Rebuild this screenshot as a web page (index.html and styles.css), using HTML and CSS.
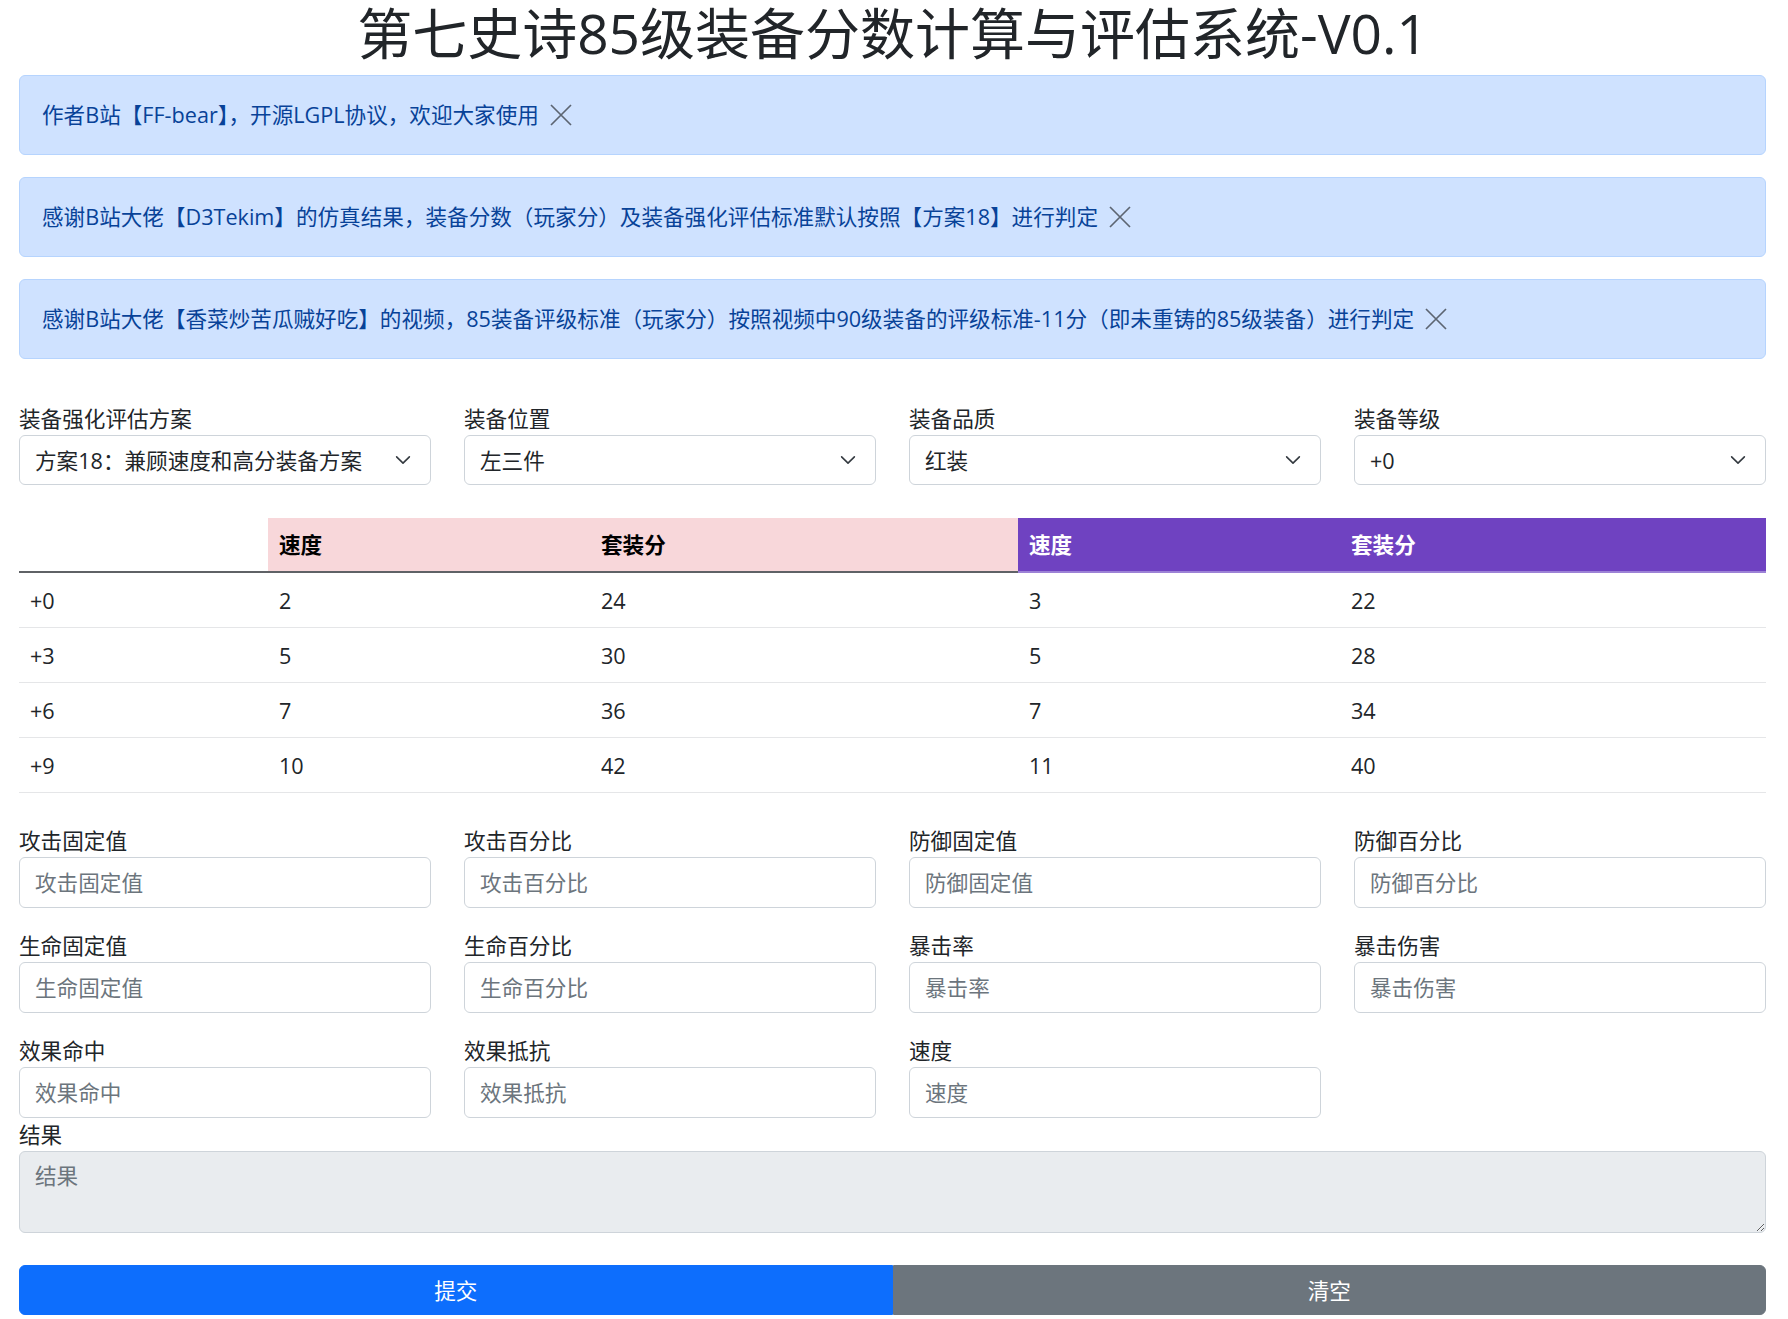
FILE: index.html
```html
<!DOCTYPE html>
<html lang="zh-CN">
<head>
<meta charset="utf-8">
<title>第七史诗85级装备分数计算与评估系统-V0.1</title>
<link rel="stylesheet" href="styles.css">
</head>
<body>
<div class="page">
  <h1 class="title">第七史诗85级装备分数计算与评估系统-V0.1</h1>

  <div class="alert">作者B站【FF-bear】，开源LGPL协议，欢迎大家使用 <button class="btn-close" type="button" aria-label="Close"><svg viewBox="0 0 22 22" width="22" height="22"><path d="M1 1L21 21M21 1L1 21"/></svg></button></div>
  <div class="alert">感谢B站大佬【D3Tekim】的仿真结果，装备分数（玩家分）及装备强化评估标准默认按照【方案18】进行判定 <button class="btn-close" type="button" aria-label="Close"><svg viewBox="0 0 22 22" width="22" height="22"><path d="M1 1L21 21M21 1L1 21"/></svg></button></div>
  <div class="alert">感谢B站大佬【香菜炒苦瓜贼好吃】的视频，85装备评级标准（玩家分）按照视频中90级装备的评级标准-11分（即未重铸的85级装备）进行判定 <button class="btn-close" type="button" aria-label="Close"><svg viewBox="0 0 22 22" width="22" height="22"><path d="M1 1L21 21M21 1L1 21"/></svg></button></div>

  <div class="grid4 selects">
    <div class="field">
      <label>装备强化评估方案</label>
      <div class="select-wrap">
        <select class="form-select"><option>方案18：兼顾速度和高分装备方案</option></select>
        <svg class="chev" viewBox="0 0 16 16" width="22" height="17"><path d="M2 5l6 6 6-6" fill="none" stroke="#343a40" stroke-width="1.5" stroke-linecap="round" stroke-linejoin="round"/></svg>
      </div>
    </div>
    <div class="field">
      <label>装备位置</label>
      <div class="select-wrap">
        <select class="form-select"><option>左三件</option></select>
        <svg class="chev" viewBox="0 0 16 16" width="22" height="17"><path d="M2 5l6 6 6-6" fill="none" stroke="#343a40" stroke-width="1.5" stroke-linecap="round" stroke-linejoin="round"/></svg>
      </div>
    </div>
    <div class="field">
      <label>装备品质</label>
      <div class="select-wrap">
        <select class="form-select"><option>红装</option></select>
        <svg class="chev" viewBox="0 0 16 16" width="22" height="17"><path d="M2 5l6 6 6-6" fill="none" stroke="#343a40" stroke-width="1.5" stroke-linecap="round" stroke-linejoin="round"/></svg>
      </div>
    </div>
    <div class="field">
      <label>装备等级</label>
      <div class="select-wrap">
        <select class="form-select"><option>+0</option></select>
        <svg class="chev" viewBox="0 0 16 16" width="22" height="17"><path d="M2 5l6 6 6-6" fill="none" stroke="#343a40" stroke-width="1.5" stroke-linecap="round" stroke-linejoin="round"/></svg>
      </div>
    </div>
  </div>

  <table class="score-table">
    <colgroup>
      <col class="c1"><col class="c2"><col class="c3"><col class="c4"><col class="c5">
    </colgroup>
    <thead>
      <tr>
        <th class="th-blank"></th>
        <th class="th-pink">速度</th>
        <th class="th-pink">套装分</th>
        <th class="th-purple">速度</th>
        <th class="th-purple">套装分</th>
      </tr>
    </thead>
    <tbody>
      <tr><td>+0</td><td>2</td><td>24</td><td>3</td><td>22</td></tr>
      <tr><td>+3</td><td>5</td><td>30</td><td>5</td><td>28</td></tr>
      <tr><td>+6</td><td>7</td><td>36</td><td>7</td><td>34</td></tr>
      <tr><td>+9</td><td>10</td><td>42</td><td>11</td><td>40</td></tr>
    </tbody>
  </table>

  <div class="grid4 inputs">
    <div class="field"><label>攻击固定值</label><input class="form-control" placeholder="攻击固定值"></div>
    <div class="field"><label>攻击百分比</label><input class="form-control" placeholder="攻击百分比"></div>
    <div class="field"><label>防御固定值</label><input class="form-control" placeholder="防御固定值"></div>
    <div class="field"><label>防御百分比</label><input class="form-control" placeholder="防御百分比"></div>
    <div class="field"><label>生命固定值</label><input class="form-control" placeholder="生命固定值"></div>
    <div class="field"><label>生命百分比</label><input class="form-control" placeholder="生命百分比"></div>
    <div class="field"><label>暴击率</label><input class="form-control" placeholder="暴击率"></div>
    <div class="field"><label>暴击伤害</label><input class="form-control" placeholder="暴击伤害"></div>
    <div class="field"><label>效果命中</label><input class="form-control" placeholder="效果命中"></div>
    <div class="field"><label>效果抵抗</label><input class="form-control" placeholder="效果抵抗"></div>
    <div class="field"><label>速度</label><input class="form-control" placeholder="速度"></div>
  </div>

  <div class="field result">
    <label>结果</label>
    <textarea class="form-control result-box" placeholder="结果" readonly></textarea>
  </div>

  <div class="btn-group">
    <button class="btn btn-primary" type="button">提交</button>
    <button class="btn btn-secondary" type="button">清空</button>
  </div>
</div>
</body>
</html>
```

FILE: styles.css
```css
* {
  box-sizing: border-box;
}

html, body {
  margin: 0;
  padding: 0;
  background: #fff;
}

body {
  font-family: "Open Sans", "Noto Sans CJK SC", sans-serif;
  font-size: 21.6px;
  line-height: 33px;
  color: #212529;
}

.page {
  padding: 0 22px 0 19px;
}

.title {
  margin: 0 0 9px;
  font-size: 55px;
  line-height: 66px;
  font-weight: 400;
  text-align: center;
  color: #212529;
}

.alert {
  margin: 0 0 22px;
  padding: 22px 22px 23px;
  border: 1px solid #b6d4fe;
  border-radius: 6px;
  background: #cfe2ff;
  color: #084298;
}

.btn-close {
  display: inline-block;
  vertical-align: top;
  width: 33px;
  height: 33px;
  padding: 5.5px;
  margin: 0;
  border: 0;
  background: transparent;
  opacity: 0.55;
  cursor: pointer;
}

.btn-close svg {
  display: block;
  fill: none;
  stroke: #000;
  stroke-width: 1.7;
}

.grid4 {
  display: grid;
  grid-template-columns: repeat(4, 1fr);
  column-gap: 33px;
  row-gap: 21px;
}

.selects {
  padding-top: 21px;
}

.field {
  display: flex;
  flex-direction: column;
  min-width: 0;
}

.field label {
  display: block;
  height: 33px;
}

.select-wrap {
  position: relative;
}

.form-select,
.form-control {
  display: block;
  width: 100%;
  height: 50px;
  margin: 0;
  padding: 7px 15px;
  font: inherit;
  font-size: 21.6px;
  line-height: 33px;
  color: #212529;
  background: #fff;
  border: 1px solid #ced4da;
  border-radius: 6px;
  outline: none;
}

.form-select {
  appearance: none;
  -webkit-appearance: none;
  padding-right: 50px;
}

.chev {
  position: absolute;
  right: 17px;
  top: 50%;
  transform: translateY(-50%);
  pointer-events: none;
}

.inputs .form-control {
  height: 51px;
}

.form-control::placeholder {
  color: #6c757d;
  opacity: 1;
}

.score-table {
  width: 100%;
  margin-top: 33px;
  border-collapse: collapse;
  table-layout: fixed;
}

.c1 { width: 249px; }
.c2 { width: 322px; }
.c3 { width: 428px; }
.c4 { width: 322px; }
.c5 { width: 426px; }

.score-table th,
.score-table td {
  padding: 10px 11px;
  text-align: left;
  line-height: 33px;
}

.score-table th {
  font-weight: 700;
  border-bottom: 2px solid #5f6266;
}

.score-table td {
  padding: 11px 11px 10px;
  border-bottom: 1px solid #e5e6e8;
}

.th-blank {
  background: #fff;
}

.th-pink {
  background: #f8d7da;
  color: #000;
}

.score-table .th-purple {
  background: #6f42c1;
  color: #fff;
  border-bottom-color: #9c82d6;
}

.inputs {
  margin-top: 31px;
}

.result-box {
  height: 82px;
  background: #e9ecef;
  resize: vertical;
}

.btn-group {
  display: flex;
  margin-top: 32px;
}

.btn {
  flex: 1 1 0;
  height: 50px;
  margin: 0;
  padding: 7px 12px;
  font: inherit;
  font-size: 21.6px;
  line-height: 33px;
  color: #fff;
  text-align: center;
  border: 1px solid transparent;
  cursor: pointer;
}

.btn-primary {
  background: #0d6efd;
  border-color: #0d6efd;
  border-radius: 6px 0 0 6px;
}

.btn-secondary {
  background: #6c757d;
  border-color: #6c757d;
  border-radius: 0 6px 6px 0;
}
```
